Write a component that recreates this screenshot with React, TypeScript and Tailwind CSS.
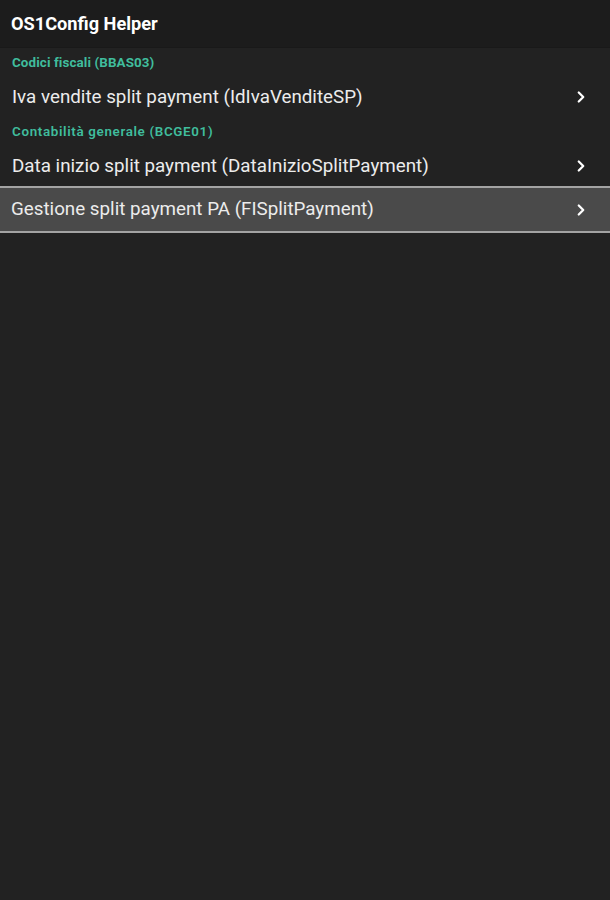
import { ChevronRight } from 'lucide-react';

interface Row {
  label?: string;
  labelClass?: string;
  text: string;
  active?: boolean;
}

const rows: Row[] = [
  {
    label: 'Codici fiscali (BBAS03)',
    labelClass: 'tracking-[0.1px]',
    text: 'Iva vendite split payment (IdIvaVenditeSP)',
  },
  {
    label: 'Contabilità generale (BCGE01)',
    labelClass: 'tracking-[0.65px] font-semibold',
    text: 'Data inizio split payment (DataInizioSplitPayment)',
  },
  { text: 'Gestione split payment PA (FISplitPayment)', active: true },
];

const Chevron = () => (
  <ChevronRight className="h-[18px] w-[18px] text-white" strokeWidth={3} />
);

export default function App() {
  return (
    <div
      className="flex h-[900px] w-[610px] flex-col bg-[#222222] text-[#ececec]"
      style={{ fontFamily: 'Roboto, "Noto Sans", sans-serif' }}
    >
      <header className="flex h-[48px] items-center border-b border-[#191919] bg-[#1c1c1c] px-[11px]">
        <h1 className="text-[18.2px] font-bold text-white">OS1Config Helper</h1>
      </header>
      <div className="flex flex-col">
        {rows.map((row) => (
          <div key={row.text} className="flex flex-col">
            {row.label && (
              <div
                className={`flex h-[29px] items-center px-[12px] pt-[1px] text-[13.4px] font-bold text-[#40bd9d] ${row.labelClass}`}
              >
                {row.label}
              </div>
            )}
            {row.active ? (
              <div className="flex h-[47px] items-center justify-between border-y-2 border-[#a3a3a3] bg-[#4a4a4a] pl-[11px] pr-[20px]">
                <span className="text-[18.8px] text-[#ececec]">{row.text}</span>
                <Chevron />
              </div>
            ) : (
              <div className="flex h-[40px] items-center justify-between pl-[12px] pr-[20px]">
                <span className="text-[18.8px] text-[#ececec]">{row.text}</span>
                <Chevron />
              </div>
            )}
          </div>
        ))}
      </div>
    </div>
  );
}
